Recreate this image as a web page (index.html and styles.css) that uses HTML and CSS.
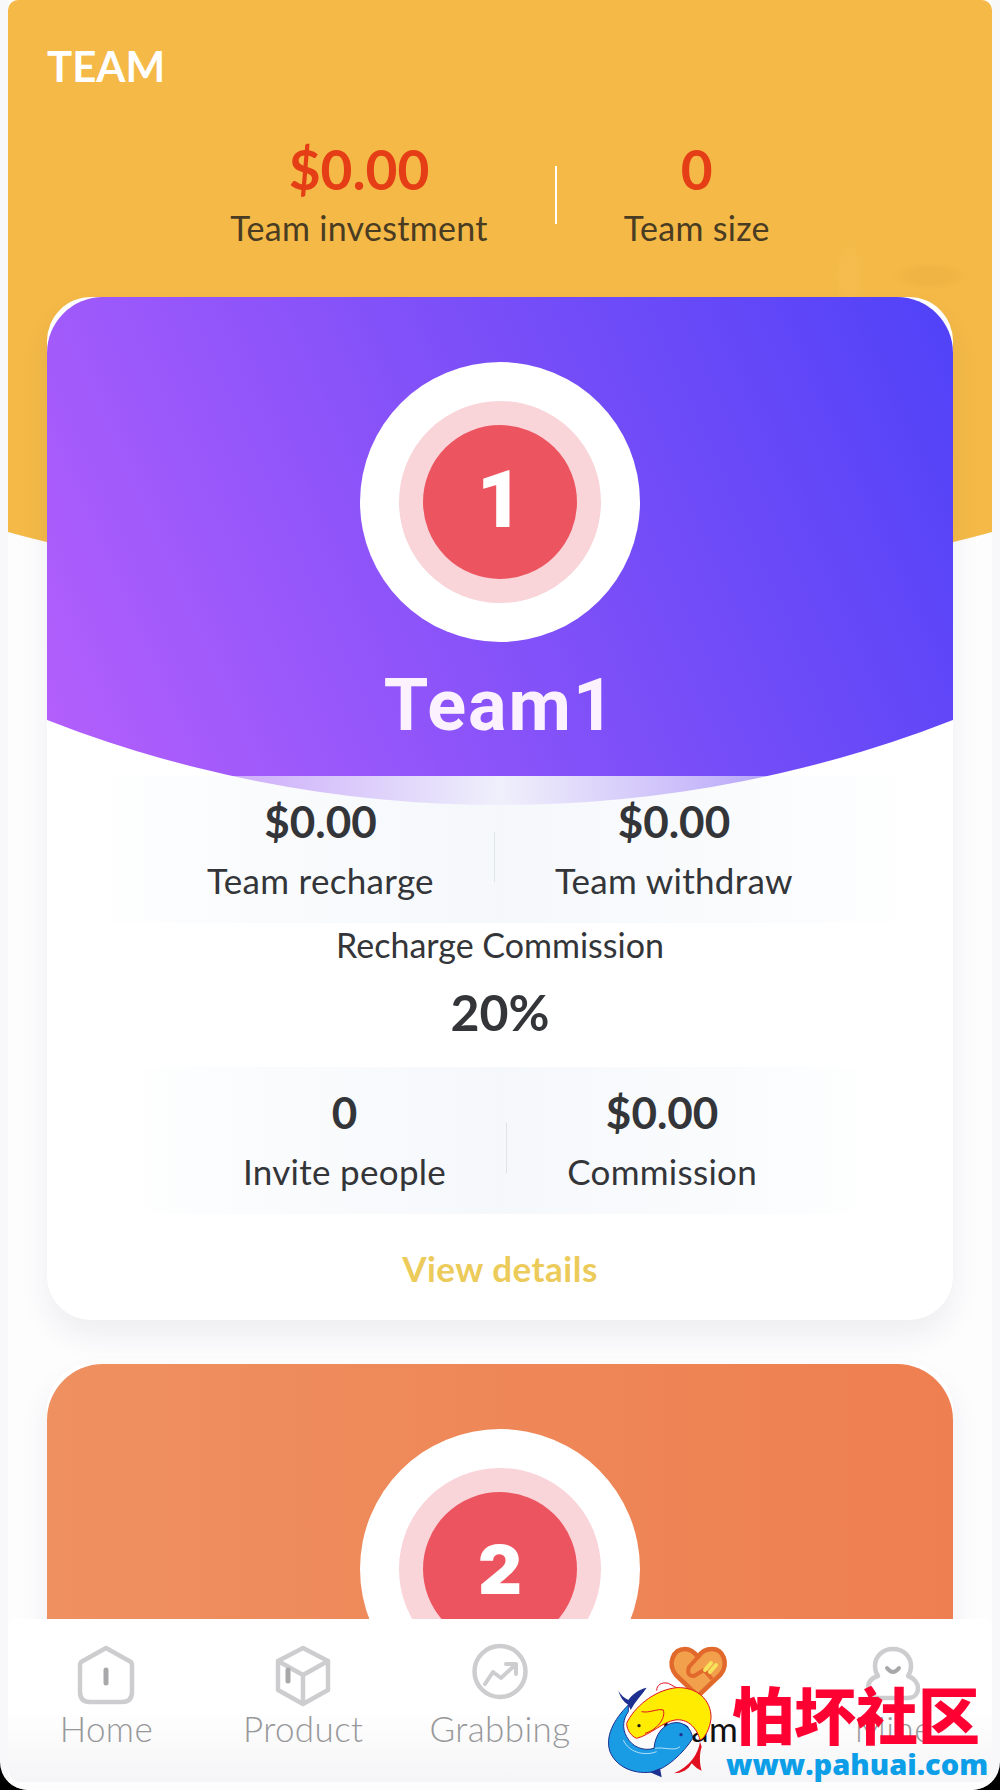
FILE: index.html
```html
<!DOCTYPE html>
<html lang="en">
<head>
  <meta charset="UTF-8" />
  <title>Team</title>
  <meta name="viewport" content="width=device-width, initial-scale=1" />
  <link rel="stylesheet" href="styles.css">
</head>
<body>

  <div class="screen">
    <main class="page">
      <section class="top">
        <h1 class="top-title">TEAM</h1>
        <div class="top-stats">
          <div class="top-stat">
            <div class="top-value">$0.00</div>
            <div class="top-label">Team investment</div>
          </div>
          <div class="top-line"></div>
          <div class="top-stat">
            <div class="top-value">0</div>
            <div class="top-label">Team size</div>
          </div>
        </div>
      </section>

      <section class="card">
        <div class="hero hero-purple">
          <div class="badge">
            <div class="badge-mid">
              <div class="badge-num">1</div>
            </div>
          </div>
          <div class="hero-name">Team1</div>
        </div>

        <div class="panel panel-first">
          <div class="cell">
            <div class="cell-value">$0.00</div>
            <div class="cell-label">Team recharge</div>
          </div>
          <div class="cell-line"></div>
          <div class="cell">
            <div class="cell-value">$0.00</div>
            <div class="cell-label">Team withdraw</div>
          </div>
        </div>

        <div class="rate-label">Recharge Commission</div>
        <div class="rate-value">20%</div>

        <div class="panel">
          <div class="cell">
            <div class="cell-value">0</div>
            <div class="cell-label">Invite people</div>
          </div>
          <div class="cell-line"></div>
          <div class="cell">
            <div class="cell-value">$0.00</div>
            <div class="cell-label">Commission</div>
          </div>
        </div>

        <a class="details" href="#">View details</a>
      </section>

      <section class="card">
        <div class="hero hero-orange">
          <div class="badge">
            <div class="badge-mid">
              <div class="badge-num badge-num-two">2</div>
            </div>
          </div>
        </div>
      </section>
    </main>

    <nav class="tabbar">
      <a class="tab" href="#">
        <svg class="tab-icon" viewBox="0 0 60 60">
          <path class="ic-line" d="M30 2 L55 16 Q56 17 56 20 V46 Q56 56 46 56 H14 Q4 56 4 46 V20 Q4 17 5 16 Z"/>
          <path class="ic-mark" d="M30 24 V37"/>
        </svg>
        <span>Home</span>
      </a>
      <a class="tab" href="#">
        <svg class="tab-icon" viewBox="0 0 60 60">
          <path class="ic-line" d="M30 2 L55 15 V44 L30 58 L5 44 V15 Z M5 15 L30 29 L55 15 M30 29 V58"/>
          <path class="ic-mark" d="M15 24 V35"/>
        </svg>
        <span>Product</span>
      </a>
      <a class="tab" href="#">
        <svg class="tab-icon" viewBox="0 0 60 60">
          <circle class="ic-line" cx="30" cy="25.5" r="25.5"/>
          <path class="ic-line ic-thin" d="M15 38 L23 26 L31 32 L45 19 M36 18 H46 V28"/>
        </svg>
        <span>Grabbing</span>
      </a>
      <a class="tab tab-on" href="#">
        <svg class="tab-icon" viewBox="0 0 60 60">
          <path class="ic-heart" d="M31 50 L9 29 C0 18 6 3 18 3 C24 3 28 7 31 11 C34 6 39 3 45 3 C56 3 62 17 54 28 Z"/>
          <path class="ic-hand" d="M31 11 L22 21 Q19 30 27 30 L37 24 L45 33"/>
          <path class="ic-spark" d="M38 24 L44 17 M43 26 L49 19"/>
        </svg>
        <span>Team</span>
      </a>
      <a class="tab" href="#">
        <svg class="tab-icon" viewBox="0 0 60 60">
          <path class="ic-line" d="M29 3 C18 3 11 11 11 20 C11 24 12 27 14 30 C7 32 4 37 4 42 C4 48 9 52 14 52 H44 C50 52 54 48 54 42 C54 37 50 32 44 30 C46 27 47 24 47 20 C47 11 40 3 29 3 Z"/>
          <path class="ic-mark ic-smile" d="M23 22 Q29 30 35 22"/>
        </svg>
        <span>Mine</span>
      </a>
    </nav>

    <!-- site watermark burned into the shot -->
    <div class="mark">
      <svg class="mark-fish" viewBox="0 0 450 450">
        <path fill="none" stroke="#e01020" stroke-width="3" d="M170 152 C170 135 185 125 205 130 L235 146"/>
        <path fill="#e01020" d="M300 305 C295 340 270 380 222 400 C245 400 265 390 275 370 C285 380 295 390 305 392 C298 370 298 340 305 320 Z"/>
        <path fill="#1a9ce5" stroke="#1d2f8f" stroke-width="3" d="M85 195 C40 240 15 290 30 335 C50 385 110 405 160 395 C200 385 250 340 278 295 C275 265 250 245 225 248 C190 250 165 285 162 325 C130 335 95 320 80 290 C65 265 70 235 85 215 Z"/>
        <path fill="#1d2f8f" d="M85 195 C70 185 60 170 55 152 C62 165 75 175 85 180 C95 165 115 148 140 143 C125 165 105 185 92 210 Z"/>
        <path fill="#1d2f8f" d="M150 397 L185 412 L180 385 Z"/>
        <path fill="#ffec00" stroke="#e01020" stroke-width="3" d="M80 250 C100 205 160 150 230 143 C290 140 335 180 333 235 C330 265 315 295 300 300 C290 260 260 235 225 240 C190 245 150 285 110 295 C95 290 80 270 80 250 Z"/>
        <path fill="none" stroke="#e01020" stroke-width="3" d="M125 215 C150 220 170 205 190 210 C198 235 170 270 135 280"/>
        <path fill="none" stroke="#fff" stroke-width="2" d="M70 300 C85 335 130 350 170 335 M165 325 C190 320 225 335 240 320"/>
        <circle cx="117" cy="257" r="5" fill="#1a1a1a"/>
        <circle cx="243" cy="284" r="5" fill="#1d2f8f"/>
      </svg>
      <div class="mark-name">怕坏社区</div>
      <div class="mark-url">www.pahuai.com</div>
    </div>
  </div>

</body>
</html>
```

FILE: styles.css
```css
:root {
  --color-yellow: #f4b947;
  --color-red: #e53e17;
  --color-text: #333539;
  --font-main: Lato, 'Noto Sans', sans-serif;
}

html, body {
  margin: 0;
  padding: 0;
  background-color: #000;
}

.screen {
  position: relative;
  width: 1000px;
  height: 1790px;
  overflow: hidden;
  border-radius: 0 0 28px 28px;
  background: linear-gradient(180deg, #f8f8fb 1781px, #dcdcdc 1783px);
  font-family: var(--font-main);
  color: var(--color-text);
}

.page {
  margin: 0 8px;
  height: 1790px;
  background-color: #fdfdfe;
}

/* yellow head */
.top {
  position: relative;
  height: 297px;
}

.top::before {
  content: '';
  position: absolute;
  left: 0;
  right: 0;
  top: 0;
  height: 600px;
  border-radius: 10px 10px 0 0;
  background:
    radial-gradient(ellipse 38px 14px at 922px 276px, rgba(232, 170, 62, 0.35) 55%, transparent 100%),
    radial-gradient(ellipse 15px 40px at 841px 277px, rgba(248, 196, 92, 0.3) 50%, transparent 100%),
    var(--color-yellow);
  clip-path: ellipse(1000px 495px at 50% 101px);
}

.top-title {
  position: relative;
  margin: 0;
  padding: 42px 0 0 39px;
  font-size: 42px;
  line-height: 48px;
  font-weight: 700;
  color: #fff;
}

.top-stats {
  position: relative;
  display: flex;
  justify-content: center;
  align-items: center;
  margin-top: 49px;
}

.top-stat {
  padding: 0 67px;
  text-align: center;
}

.top-value {
  font-size: 55px;
  line-height: 60px;
  font-weight: 700;
  color: var(--color-red);
}

.top-label {
  margin-top: 6px;
  font-size: 34px;
  line-height: 46px;
  letter-spacing: 0.3px;
  color: #4a3c22;
}

.top-line {
  width: 2px;
  height: 58px;
  background-color: #fff;
}

/* team cards */
.card {
  position: relative;
  margin: 0 39px 44px 39px;
  border-radius: 44px;
  background-color: #fff;
  box-shadow: 0 16px 30px rgba(40, 40, 70, 0.07);
}

.hero {
  height: 508px;
  padding-top: 65px;
  box-sizing: border-box;
  border-radius: 56px 56px 0 0;
  text-align: center;
  clip-path: circle(1250px at 50% -742px);
}

.hero-purple {
  background: linear-gradient(66deg, #b660fc 0%, #7c4ff8 55%, #5042f8 100%);
}

.hero-orange {
  background: linear-gradient(90deg, #ef9060 0%, #ee7f50 100%);
  height: 300px;
  clip-path: none;
}

.badge {
  display: flex;
  align-items: center;
  justify-content: center;
  width: 280px;
  height: 280px;
  margin: 0 auto;
  border-radius: 50%;
  background-color: #fff;
}

.badge-mid {
  display: flex;
  align-items: center;
  justify-content: center;
  width: 154px;
  height: 154px;
  border: 24px solid #f9d4d9;
  border-radius: 50%;
  background-color: #ec5560;
}

.badge-num {
  padding-bottom: 4px;
  font-family: Roboto, sans-serif;
  font-size: 80px;
  line-height: 1;
  font-weight: 900;
  color: #fff;
}

.badge-num-two {
  padding-bottom: 0;
  font-family: Inter, sans-serif;
  font-size: 68px;
}

.hero-name {
  margin-top: 22px;
  font-family: Roboto, sans-serif;
  font-size: 72px;
  line-height: 84px;
  font-weight: 700;
  letter-spacing: 2px;
  color: #fcf2ff;
}

.panel {
  position: relative;
  display: flex;
  justify-content: center;
  width: fit-content;
  height: 147px;
  box-sizing: border-box;
  margin: 0 auto;
  padding: 14px 69px 0 69px;
  background: linear-gradient(90deg, rgba(245, 248, 251, 0), rgba(245, 248, 251, 0.55) 20%, rgba(245, 248, 251, 0.95) 50%, rgba(245, 248, 251, 0.55) 80%, rgba(245, 248, 251, 0));
}

.panel-first {
  margin-top: -29px;
}

.cell {
  padding: 0 60px;
  text-align: center;
}

.cell-value {
  font-size: 44px;
  line-height: 62px;
  font-weight: 700;
}

.cell-label {
  font-size: 35px;
  line-height: 56px;
  letter-spacing: 0.3px;
}

.cell-line {
  align-self: center;
  width: 1px;
  height: 50px;
  background-color: #dfe3e6;
}

.rate-label {
  font-size: 34px;
  line-height: 44px;
  text-align: center;
}

.rate-value {
  margin-bottom: 10px;
  font-size: 50px;
  line-height: 90px;
  font-weight: 700;
  text-align: center;
}

.details {
  display: block;
  margin-top: 14px;
  padding-bottom: 12px;
  font-size: 35px;
  line-height: 80px;
  font-weight: 700;
  letter-spacing: 0.5px;
  text-align: center;
  text-decoration: none;
  color: #eccb5a;
}

/* bottom tabs */
.tabbar {
  position: absolute;
  left: 8px;
  right: 8px;
  top: 1619px;
  display: flex;
  height: 163px;
  box-sizing: border-box;
  padding-top: 27px;
  border-radius: 6px 6px 14px 14px;
  background: linear-gradient(180deg, #fff 55%, #f5f5f7 100%);
}

.tab {
  flex: 1;
  display: flex;
  flex-direction: column;
  align-items: center;
  font-size: 35px;
  line-height: 44px;
  font-weight: 300;
  letter-spacing: 0.4px;
  text-decoration: none;
  color: #98989a;
}

.tab-on {
  font-weight: 400;
  color: #111;
}

.tab-icon {
  width: 60px;
  height: 60px;
  overflow: visible;
}

.ic-line {
  fill: none;
  stroke: #cdcdcf;
  stroke-width: 4.5;
  stroke-linejoin: round;
  stroke-linecap: round;
}

.ic-thin {
  stroke-width: 4;
}

.ic-mark {
  fill: none;
  stroke: #a8a8aa;
  stroke-width: 5;
  stroke-linecap: round;
}

.ic-smile {
  stroke-width: 4;
}

.ic-heart {
  fill: #f3a04c;
  stroke: #e2692c;
  stroke-width: 4.5;
  stroke-linejoin: round;
}

.ic-hand {
  fill: none;
  stroke: #e2692c;
  stroke-width: 4;
  stroke-linejoin: round;
}

.ic-spark {
  fill: none;
  stroke: #f7e35a;
  stroke-width: 4;
  stroke-linecap: round;
}

/* watermark */
.mark-fish {
  position: absolute;
  left: 600px;
  top: 1640px;
  width: 150px;
  height: 150px;
}

.mark-name {
  position: absolute;
  left: 732px;
  top: 1668px;
  font-family: 'Noto Sans CJK SC', sans-serif;
  font-size: 62px;
  line-height: 90px;
  font-weight: 900;
  color: #ff0033;
}

.mark-url {
  position: absolute;
  left: 726px;
  top: 1744px;
  font-family: 'Open Sans', sans-serif;
  font-size: 29px;
  line-height: 40px;
  font-weight: 800;
  color: #0d9ee8;
}
```
